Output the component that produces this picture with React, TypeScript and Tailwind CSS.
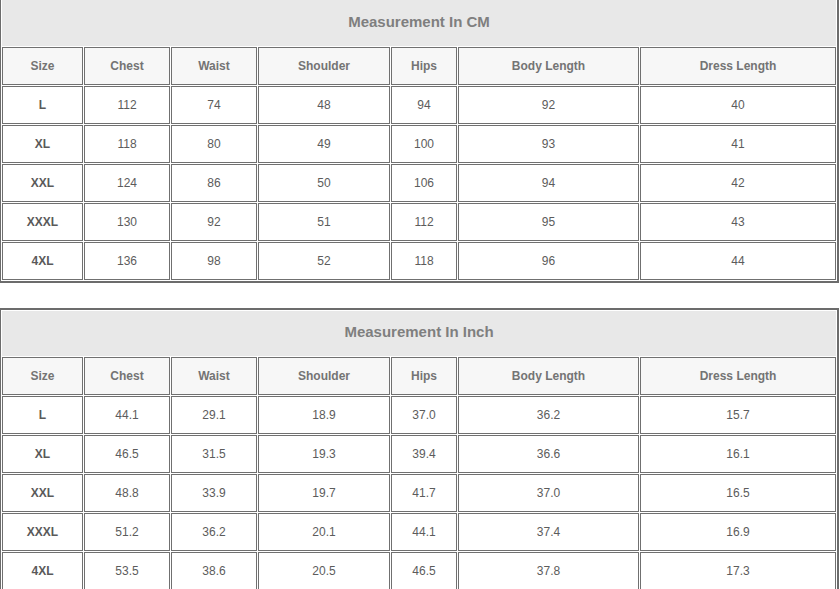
import React from "react";

const columns = [
  { label: "Size", width: "w-[81px]" },
  { label: "Chest", width: "w-[86px]" },
  { label: "Waist", width: "w-[86px]" },
  { label: "Shoulder", width: "w-[132px]" },
  { label: "Hips", width: "w-[66px]" },
  { label: "Body Length", width: "w-[181px]" },
  { label: "Dress Length", width: "w-[196px]" },
];

const cmRows = [
  ["L", "112", "74", "48", "94", "92", "40"],
  ["XL", "118", "80", "49", "100", "93", "41"],
  ["XXL", "124", "86", "50", "106", "94", "42"],
  ["XXXL", "130", "92", "51", "112", "95", "43"],
  ["4XL", "136", "98", "52", "118", "96", "44"],
];

const inchRows = [
  ["L", "44.1", "29.1", "18.9", "37.0", "36.2", "15.7"],
  ["XL", "46.5", "31.5", "19.3", "39.4", "36.6", "16.1"],
  ["XXL", "48.8", "33.9", "19.7", "41.7", "37.0", "16.5"],
  ["XXXL", "51.2", "36.2", "20.1", "44.1", "37.4", "16.9"],
  ["4XL", "53.5", "38.6", "20.5", "46.5", "37.8", "17.3"],
];

const SizeTable: React.FC<{
  title: string;
  rows: string[][];
  titleHeight: string;
  className?: string;
}> = ({ title, rows, titleHeight, className = "" }) => (
  <table
    className={`w-[839px] table-fixed border-separate border-spacing-[1px] border-t-2 border-l border-r-2 border-b-2 border-[#6c6c6c] font-['Liberation_Sans',Arial,sans-serif] ${className}`}
  >
    <colgroup>
      {columns.map((c) => (
        <col key={c.label} className={c.width} />
      ))}
    </colgroup>
    <tbody>
      <tr>
        <td
          colSpan={7}
          className={`${titleHeight} p-0 pb-[2px] border border-[#e8e8e8] bg-[#e8e8e8] text-center text-[15px] font-bold text-[#7f7f7f]`}
        >
          {title}
        </td>
      </tr>
      <tr>
        {columns.map((c) => (
          <td
            key={c.label}
            className="h-[38px] p-0 border border-[#707070] bg-[#f7f7f7] text-center text-[12px] font-bold text-[#747474]"
          >
            {c.label}
          </td>
        ))}
      </tr>
      {rows.map((row, i) => (
        <tr key={i}>
          {row.map((v, j) => (
            <td
              key={j}
              className={`h-[38px] p-0 border border-[#707070] bg-white text-center text-[12px] ${
                j === 0 ? "font-bold text-[#5a5a5a]" : "text-[#5c5c5c]"
              }`}
            >
              {v}
            </td>
          ))}
        </tr>
      ))}
    </tbody>
  </table>
);

export default function App() {
  return (
    <div className="w-[840px] h-[589px] overflow-hidden bg-white">
      <SizeTable
        title="Measurement In CM"
        rows={cmRows}
        titleHeight="h-[46px]"
        className="-mt-[3px]"
      />
      <SizeTable
        title="Measurement In Inch"
        rows={inchRows}
        titleHeight="h-[45px]"
        className="mt-[25px]"
      />
    </div>
  );
}
